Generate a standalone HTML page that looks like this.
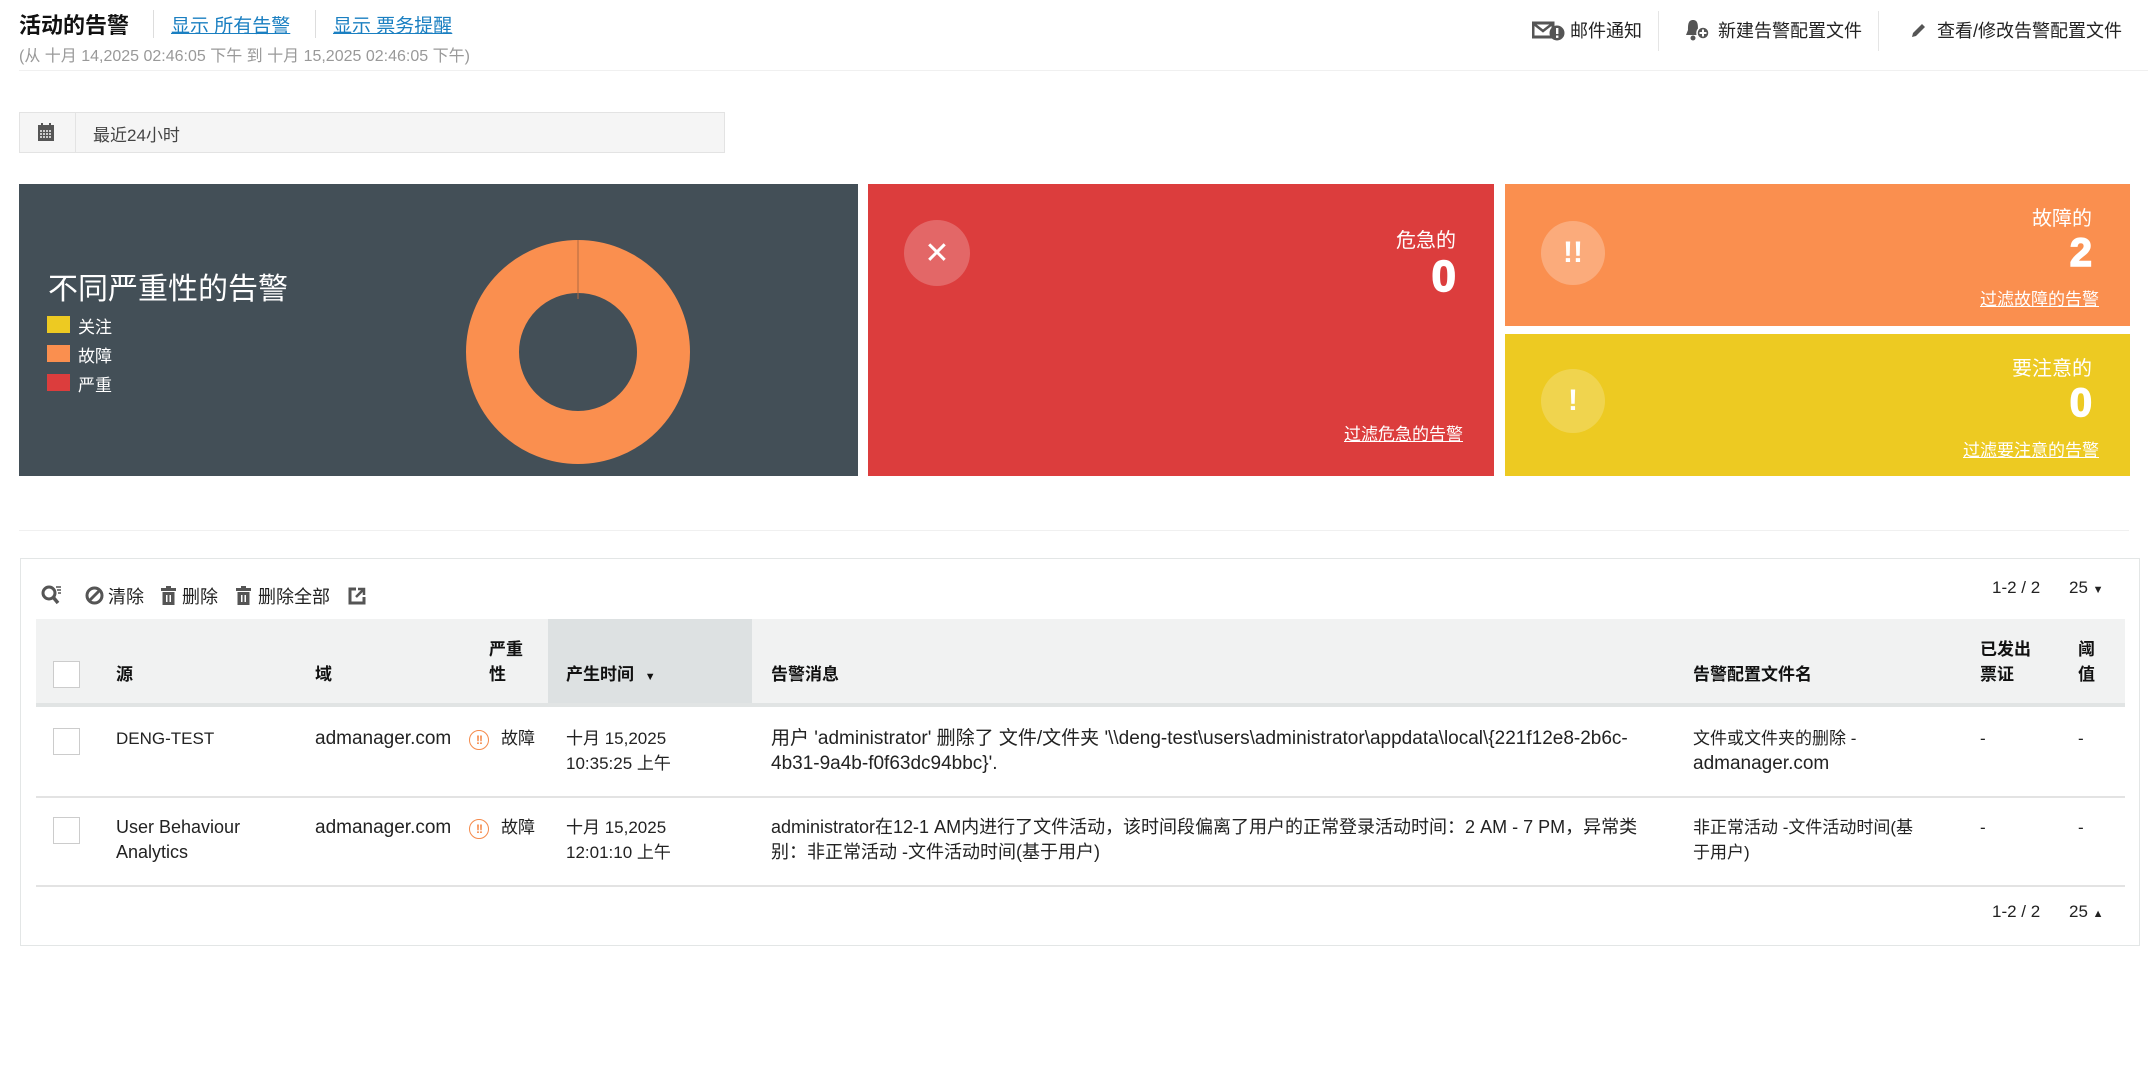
<!DOCTYPE html>
<html><head><meta charset="utf-8"><style>
*{margin:0;padding:0;box-sizing:border-box}
body{width:2148px;height:1070px;background:#fff;position:relative;overflow:hidden;font-family:"Liberation Sans","Noto Sans CJK SC",sans-serif;color:#222}
.a{position:absolute;white-space:nowrap}
.lk{color:#1a7fc1;text-decoration:underline}
.w{color:#fff}
.r{text-align:right}
.circ{position:absolute;border-radius:50%;background:rgba(255,255,255,.22);color:#fff;display:flex;align-items:center;justify-content:center;font-weight:bold}
.hd{font-weight:bold;font-size:17px;line-height:25px;color:#111}
.td{font-size:17px;line-height:25px;color:#222}
.cb{position:absolute;width:27px;height:27px;border:1.5px solid #ccc;background:#fff}
.sev{position:absolute;width:20px;height:20px;border:1.5px solid #f58a4b;border-radius:50%;color:#f58a4b;font-size:12px;font-weight:bold;display:flex;align-items:center;justify-content:center;letter-spacing:-1px}
</style></head><body>

<div class="a" style="left:19px;top:8px;font-size:22px;font-weight:bold;color:#111">活动的告警</div>
<div class="a" style="left:153px;top:10px;width:1px;height:28px;background:#ddd"></div>
<div class="a lk" style="left:171px;top:11px;font-size:19px">显示 所有告警</div>
<div class="a" style="left:315px;top:10px;width:1px;height:28px;background:#ddd"></div>
<div class="a lk" style="left:333px;top:11px;font-size:19px">显示 票务提醒</div>
<div class="a" style="left:19px;top:42px;font-size:16px;color:#999">(从 十月 14,2025 02:46:05 下午 到 十月 15,2025 02:46:05 下午)</div>
<div class="a" style="left:19px;top:70px;width:2129px;height:1px;background:#f0f0f0"></div>

<svg class="a" style="left:1532px;top:21px" width="34" height="20" viewBox="0 0 34 20"><rect x="1" y="2" width="20" height="14" fill="none" stroke="#555" stroke-width="3"/><path d="M2 3 L11 10 L20 3" fill="none" stroke="#555" stroke-width="2.5"/><circle cx="25" cy="12" r="7.5" fill="#555"/><rect x="24" y="7" width="2.4" height="6" fill="#fff"/><rect x="24" y="14.5" width="2.4" height="2.4" fill="#fff"/></svg>
<div class="a" style="left:1570px;top:17px;font-size:18px">邮件通知</div>
<div class="a" style="left:1658px;top:11px;width:1px;height:40px;background:#e5e5e5"></div>
<svg class="a" style="left:1685px;top:18px" width="26" height="24" viewBox="0 0 26 24"><path d="M8 2 C3 2 3 7 3 12 L1 17 L15 17 L13 12 C13 7 13 2 8 2Z" fill="#555"/><circle cx="8" cy="20" r="2.5" fill="#555"/><circle cx="18" cy="15" r="6" fill="#555" stroke="#fff" stroke-width="1.5"/><path d="M18 11.5v7M14.5 15h7" stroke="#fff" stroke-width="2"/></svg>
<div class="a" style="left:1718px;top:17px;font-size:18px">新建告警配置文件</div>
<div class="a" style="left:1878px;top:11px;width:1px;height:40px;background:#e5e5e5"></div>
<svg class="a" style="left:1910px;top:21px" width="18" height="18" viewBox="0 0 18 18"><path d="M2 16 L3 12 L12 3 L15 6 L6 15 Z" fill="#555"/></svg>
<div class="a" style="left:1937px;top:17px;font-size:18px">查看/修改告警配置文件</div>

<div class="a" style="left:19px;top:112px;width:706px;height:41px;background:#f5f5f5;border:1px solid #e3e3e3"></div>
<div class="a" style="left:75px;top:113px;width:1px;height:39px;background:#e3e3e3"></div>
<svg class="a" style="left:38px;top:123px" width="16" height="18" viewBox="0 0 16 18"><rect x="0" y="2" width="16" height="16" fill="#555"/><rect x="3" y="0" width="2" height="4" fill="#555"/><rect x="11" y="0" width="2" height="4" fill="#555"/><g fill="#ccc"><rect x="2" y="7" width="2" height="2"/><rect x="5" y="7" width="2" height="2"/><rect x="8" y="7" width="2" height="2"/><rect x="11" y="7" width="2" height="2"/><rect x="2" y="10" width="2" height="2"/><rect x="5" y="10" width="2" height="2"/><rect x="8" y="10" width="2" height="2"/><rect x="11" y="10" width="2" height="2"/><rect x="2" y="13" width="2" height="2"/><rect x="5" y="13" width="2" height="2"/><rect x="8" y="13" width="2" height="2"/><rect x="11" y="13" width="2" height="2"/></g></svg>
<div class="a" style="left:93px;top:121px;font-size:17px;color:#444">最近24小时</div>

<div class="a" style="left:19px;top:184px;width:839px;height:292px;background:#434f57"></div>
<div class="a w" style="left:48px;top:264px;font-size:30px">不同严重性的告警</div>
<div class="a" style="left:47px;top:316px;width:23px;height:17px;background:#edca22"></div>
<div class="a w" style="left:78px;top:313px;font-size:17px">关注</div>
<div class="a" style="left:47px;top:345px;width:23px;height:17px;background:#fa8f4f"></div>
<div class="a w" style="left:78px;top:342px;font-size:17px">故障</div>
<div class="a" style="left:47px;top:374px;width:23px;height:17px;background:#dc3d3d"></div>
<div class="a w" style="left:78px;top:371px;font-size:17px">严重</div>
<svg class="a" style="left:466px;top:240px" width="224" height="224" viewBox="0 0 224 224"><circle cx="112" cy="112" r="85.5" fill="none" stroke="#fa8f4f" stroke-width="53"/><line x1="112" y1="0" x2="112" y2="59" stroke="#b06a40" stroke-width="1"/></svg>

<div class="a" style="left:868px;top:184px;width:626px;height:292px;background:#dc3d3d"></div>
<div class="circ" style="left:904px;top:220px;width:66px;height:66px;font-size:30px;font-weight:normal">✕</div>
<div class="a w r" style="right:692px;top:224px;font-size:20px">危急的</div>
<div class="a w r" style="right:692px;top:252px;font-size:44px;font-weight:bold;-webkit-text-stroke:1.5px #fff">0</div>
<div class="a w r" style="right:685px;top:420px;font-size:17px;text-decoration:underline">过滤危急的告警</div>

<div class="a" style="left:1505px;top:184px;width:625px;height:142px;background:#fa8f4f"></div>
<div class="circ" style="left:1541px;top:221px;width:64px;height:64px;font-size:30px;background:rgba(255,255,255,.25)">!!</div>
<div class="a w r" style="right:56px;top:202px;font-size:20px">故障的</div>
<div class="a w r" style="right:56px;top:231px;font-size:40px;font-weight:bold;-webkit-text-stroke:1.5px #fff">2</div>
<div class="a w r" style="right:49px;top:285px;font-size:17px;text-decoration:underline">过滤故障的告警</div>

<div class="a" style="left:1505px;top:334px;width:625px;height:142px;background:#edca22"></div>
<div class="circ" style="left:1541px;top:369px;width:64px;height:64px;font-size:30px;background:rgba(255,255,255,.2)">!</div>
<div class="a w r" style="right:56px;top:352px;font-size:20px">要注意的</div>
<div class="a w r" style="right:56px;top:381px;font-size:40px;font-weight:bold;-webkit-text-stroke:1.5px #fff">0</div>
<div class="a w r" style="right:49px;top:436px;font-size:17px;text-decoration:underline">过滤要注意的告警</div>

<div class="a" style="left:19px;top:530px;width:2110px;height:1px;background:#f0f0f0"></div>

<div class="a" style="left:20px;top:558px;width:2120px;height:388px;border:1.5px solid #e3e6e6"></div>
<svg class="a" style="left:41px;top:584px" width="22" height="22" viewBox="0 0 22 22"><circle cx="8" cy="9" r="6" fill="none" stroke="#555" stroke-width="3"/><path d="M12 13 L17 19" stroke="#555" stroke-width="3.5"/><path d="M15 3h5M16 6h4M17 9h3" stroke="#555" stroke-width="1.5"/></svg>
<svg class="a" style="left:85px;top:586px" width="19" height="19" viewBox="0 0 19 19"><circle cx="9.5" cy="9.5" r="7.5" fill="none" stroke="#555" stroke-width="3"/><path d="M5 14 L14 5" stroke="#555" stroke-width="3"/></svg>
<div class="a" style="left:108px;top:583px;font-size:18px">清除</div>
<svg class="a" style="left:161px;top:586px" width="15" height="19" viewBox="0 0 15 19"><rect x="0" y="2" width="15" height="3" fill="#555"/><rect x="5" y="0" width="5" height="2" fill="#555"/><rect x="1.5" y="6" width="12" height="13" fill="#555"/><rect x="5" y="9" width="1.5" height="7" fill="#fff"/><rect x="8.5" y="9" width="1.5" height="7" fill="#fff"/></svg>
<div class="a" style="left:182px;top:583px;font-size:18px">删除</div>
<svg class="a" style="left:236px;top:586px" width="15" height="19" viewBox="0 0 15 19"><rect x="0" y="2" width="15" height="3" fill="#555"/><rect x="5" y="0" width="5" height="2" fill="#555"/><rect x="1.5" y="6" width="12" height="13" fill="#555"/><rect x="5" y="9" width="1.5" height="7" fill="#fff"/><rect x="8.5" y="9" width="1.5" height="7" fill="#fff"/></svg>
<div class="a" style="left:258px;top:583px;font-size:18px">删除全部</div>
<svg class="a" style="left:348px;top:587px" width="18" height="18" viewBox="0 0 18 18"><path d="M8 2H2v14h14v-6" fill="none" stroke="#555" stroke-width="3"/><path d="M8 10 L15 3M10 2h6v6" fill="none" stroke="#555" stroke-width="2.5"/></svg>
<div class="a" style="left:1992px;top:578px;font-size:17px">1-2 / 2</div>
<div class="a" style="left:2069px;top:578px;font-size:17px">25 <span style="font-size:11px">▼</span></div>

<div class="a" style="left:36px;top:619px;width:2089px;height:84px;background:#f1f2f2"></div>
<div class="a" style="left:548px;top:619px;width:204px;height:84px;background:#dde1e2"></div>
<div class="a" style="left:36px;top:703px;width:2089px;height:4px;background:#e1e4e4"></div>
<div class="cb" style="left:53px;top:661px"></div>
<div class="a hd" style="left:116px;top:662px">源</div>
<div class="a hd" style="left:315px;top:662px">域</div>
<div class="a hd" style="left:489px;top:637px">严重<br>性</div>
<div class="a hd" style="left:566px;top:662px">产生时间 <span style="font-size:11px;margin-left:6px">▼</span></div>
<div class="a hd" style="left:771px;top:662px">告警消息</div>
<div class="a hd" style="left:1693px;top:662px">告警配置文件名</div>
<div class="a hd" style="left:1980px;top:637px">已发出<br>票证</div>
<div class="a hd" style="left:2078px;top:637px">阈<br>值</div>

<div class="cb" style="left:53px;top:728px"></div>
<div class="a td" style="left:116px;top:726px">DENG-TEST</div>
<div class="a td" style="left:315px;top:726px;font-size:19px">admanager.com</div>
<div class="sev" style="left:469px;top:730px">!!</div>
<div class="a td" style="left:501px;top:726px">故障</div>
<div class="a td" style="left:566px;top:726px">十月 15,2025<br>10:35:25 上午</div>
<div class="a td" style="left:771px;top:726px;font-size:19px">用户 'administrator' 删除了 文件/文件夹 '\\deng-test\users\administrator\appdata\local\{221f12e8-2b6c-<br>4b31-9a4b-f0f63dc94bbc}'.</div>
<div class="a td" style="left:1693px;top:726px">文件或文件夹的删除 -<br><span style="font-size:19px">admanager.com</span></div>
<div class="a td" style="left:1980px;top:726px">-</div>
<div class="a td" style="left:2078px;top:726px">-</div>
<div class="a" style="left:36px;top:796px;width:2089px;height:1.5px;background:#e3e3e3"></div>

<div class="cb" style="left:53px;top:817px"></div>
<div class="a td" style="left:116px;top:815px;font-size:18px">User Behaviour<br>Analytics</div>
<div class="a td" style="left:315px;top:815px;font-size:19px">admanager.com</div>
<div class="sev" style="left:469px;top:819px">!!</div>
<div class="a td" style="left:501px;top:815px">故障</div>
<div class="a td" style="left:566px;top:815px">十月 15,2025<br>12:01:10 上午</div>
<div class="a td" style="left:771px;top:815px;font-size:18px">administrator在12-1 AM内进行了文件活动，该时间段偏离了用户的正常登录活动时间：2 AM - 7 PM，异常类<br>别：非正常活动 -文件活动时间(基于用户)</div>
<div class="a td" style="left:1693px;top:815px">非正常活动 -文件活动时间(基<br>于用户)</div>
<div class="a td" style="left:1980px;top:815px">-</div>
<div class="a td" style="left:2078px;top:815px">-</div>
<div class="a" style="left:36px;top:885px;width:2089px;height:1.5px;background:#e3e3e3"></div>

<div class="a" style="left:1992px;top:902px;font-size:17px">1-2 / 2</div>
<div class="a" style="left:2069px;top:902px;font-size:17px">25 <span style="font-size:11px">▲</span></div>
</body></html>
